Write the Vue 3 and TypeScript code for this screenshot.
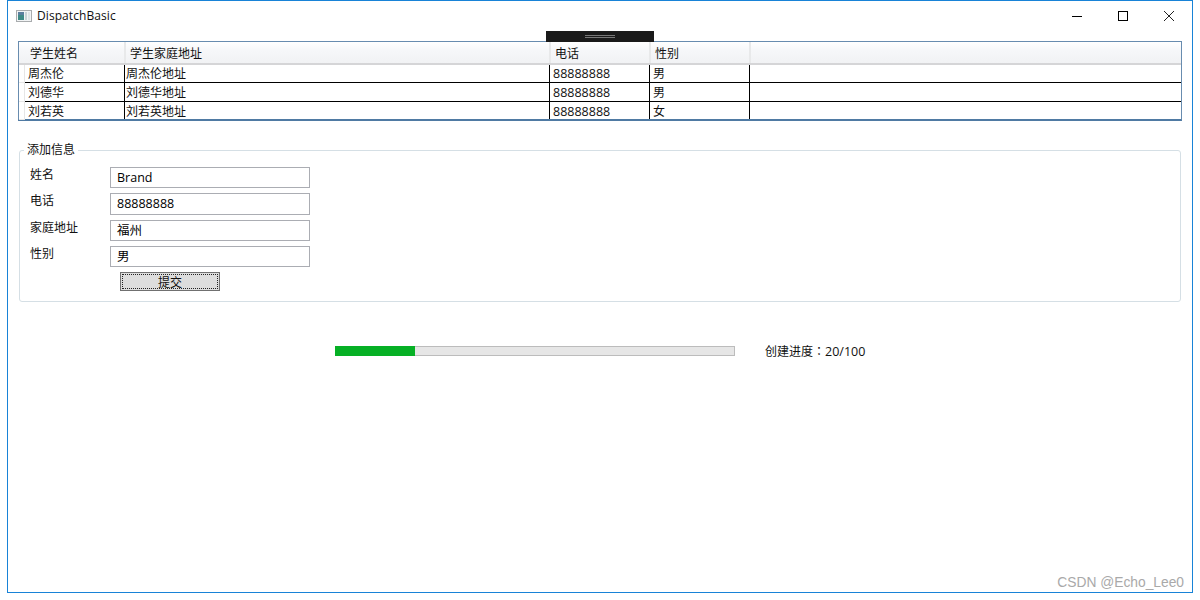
<script setup lang="ts">
interface Student { name: string; address: string; phone: string; gender: string }
const students: Student[] = [
  { name: '周杰伦', address: '周杰伦地址', phone: '88888888', gender: '男' },
  { name: '刘德华', address: '刘德华地址', phone: '88888888', gender: '男' },
  { name: '刘若英', address: '刘若英地址', phone: '88888888', gender: '女' },
]
const fields = [
  { label: '姓名', value: 'Brand' },
  { label: '电话', value: '88888888' },
  { label: '家庭地址', value: '福州' },
  { label: '性别', value: '男' },
]
const progress = 20
</script>

<template>
  <div class="window">
    <header class="titlebar">
      <svg class="app-icon" width="16" height="16" viewBox="0 0 16 16">
        <rect x="0.5" y="2.5" width="15" height="11" fill="#f2f4f5" stroke="#a9acae" />
        <rect x="2" y="4" width="6" height="8" fill="#3f8a86" />
        <rect x="2" y="4" width="6" height="3" fill="#5b7f9e" />
        <rect x="9" y="4" width="2" height="8" fill="#c9d4d6" />
        <rect x="12" y="4" width="2" height="8" fill="#dfe5e6" />
      </svg>
      <span class="title">DispatchBasic</span>
      <div class="controls">
        <svg width="46" height="30" viewBox="0 0 46 30"><path d="M18 15.5h10" stroke="#000" fill="none" /></svg>
        <svg width="46" height="30" viewBox="0 0 46 30"><rect x="18.5" y="10.5" width="9" height="9" stroke="#000" fill="none" /></svg>
        <svg width="46" height="30" viewBox="0 0 46 30"><path d="M18 10l10 10M28 10l-10 10" stroke="#222" fill="none" /></svg>
      </div>
    </header>

    <div class="debug-bar"><i></i></div>

    <main class="content">
      <section class="table">
        <div class="row head">
          <div class="gutter"></div>
          <div class="th c1">学生姓名</div>
          <div class="th c2">学生家庭地址</div>
          <div class="th c3">电话</div>
          <div class="th c4">性别</div>
          <div class="th fill"></div>
        </div>
        <div v-for="s in students" :key="s.name" class="row body">
          <div class="gutter"></div>
          <div class="td c1">{{ s.name }}</div>
          <div class="td c2">{{ s.address }}</div>
          <div class="td c3">{{ s.phone }}</div>
          <div class="td c4">{{ s.gender }}</div>
          <div class="td fill"></div>
        </div>
      </section>

      <fieldset class="group">
        <legend>添加信息</legend>
        <div class="fields">
          <div v-for="f in fields" :key="f.label" class="field">
            <label>{{ f.label }}</label>
            <div class="input">{{ f.value }}</div>
          </div>
        </div>
        <div class="button"><span>提交</span></div>
      </fieldset>

      <section class="progress">
        <div class="track"><div class="bar" :style="{ width: progress + '%' }"></div></div>
        <span class="progress-text">创建进度<span class="colon">：</span><span class="num">{{ progress }}/100</span></span>
      </section>
    </main>

    <div class="watermark">CSDN @Echo_Lee0</div>
  </div>
</template>

<style>
html, body { background: #fff; }
</style>

<style scoped>
.window {
  position: relative;
  box-sizing: border-box;
  width: 1186px;
  height: 593px;
  margin-left: 7px;
  border: 1px solid #1883d7;
  background: #fff;
  font: 12px/16px "Open Sans", "Noto Sans CJK SC", sans-serif;
  color: #111;
  display: flex;
  flex-direction: column;
}
.titlebar {
  height: 30px;
  display: flex;
  align-items: center;
  flex: none;
}
.app-icon { margin-left: 8px; margin-top: -1px; }
.title { margin-left: 5px; margin-top: -1px; letter-spacing: 0.08px; }
.controls { margin-left: auto; display: flex; }
.debug-bar {
  position: absolute;
  left: 538px;
  top: 30px;
  width: 108px;
  height: 11px;
  background: #1a1a1a;
  display: flex;
  align-items: center;
  justify-content: center;
}
.debug-bar i {
  display: block;
  width: 30px;
  height: 3px;
  border-top: 1px solid #777;
  border-bottom: 1px solid #777;
  box-sizing: border-box;
}
.content {
  padding: 10px 10px 0 10px;
  display: flex;
  flex-direction: column;
}
.table {
  box-sizing: border-box;
  width: 1164px;
  height: 80px;
  border: 1px solid #688caf;
  border-bottom: 2px solid #4f7aa3;
}
.row { display: flex; }
.head {
  height: 23px;
  box-sizing: border-box;
  background: linear-gradient(#ffffff 0, #f6f7f9 40%, #f1f2f4 100%);
  border-bottom: 2px solid #d5d5d7;
}
.body { height: 18px; box-sizing: border-box; border-bottom: 1px solid #000; }
.body:nth-child(3) { height: 19px; }
.body:last-child { height: 17px; border-bottom: 0; }
.gutter { width: 6px; flex: none; box-sizing: border-box; }
.body .gutter {
  border-right: 1px solid #e6e6e6;
  margin-bottom: -1px;
  border-bottom: 1px solid #e6e6e6;
}
.th, .td { box-sizing: border-box; flex: none; white-space: nowrap; }
.th { border-right: 2px solid #e8e9ea; padding: 4px 0 0 4px; }
.td { border-right: 1px solid #000; padding-left: 3px; line-height: 17px; }
.body:nth-child(3) .td, .body:last-child .td { line-height: 19px; }
.c1 { width: 100px; }
.th.c1 { width: 101px; padding-left: 5px; }
.c2 { width: 425px; }
.td.c2 { padding-left: 1px; }
.c3 { width: 100px; }
.td.c3 { font-size: 12.5px; }
.c4 { width: 100px; }
.th.fill, .td.fill { flex: 1; border-right: 0; }
.group {
  box-sizing: border-box;
  width: 1162px;
  height: 160px;
  margin: 21px 0 0 1px;
  padding: 0 0 0 10px;
  border: 1px solid #d5dfe5;
  border-radius: 3px;
  min-width: 0;
}
.group legend { padding: 0 3px; margin-left: -6px; font-size: 12px; line-height: 16px; }
.fields { padding-top: 9px; }
.field {
  display: flex;
  height: 26.4px;
}
.field label { width: 80px; flex: none; }
.input {
  box-sizing: border-box;
  width: 200px;
  height: 21.2px;
  border: 1px solid #abadb3;
  padding-left: 6px;
  line-height: 19px;
  color: #000;
  font-size: 12.5px;
}
.field:nth-child(2) .input { line-height: 20px; }
.button {
  box-sizing: border-box;
  width: 100px;
  height: 19px;
  margin: -0.6px 0 0 90px;
  background: #dddddd;
  border: 1px solid #707070;
  padding: 1px;
  text-align: center;
}
.button span {
  display: block;
  box-sizing: border-box;
  height: 15px;
  border: 1px dotted #222;
  line-height: 15px;
}
.progress {
  display: flex;
  align-items: center;
  margin: 43px 0 0 317px;
  height: 12px;
}
.track {
  box-sizing: border-box;
  width: 400px;
  height: 10px;
  background: #e6e6e6;
  border: 1px solid #bcbcbc;
}
.bar { height: 10px; margin: -1px; background: #06b025; }
.progress-text { margin-left: 30px; white-space: nowrap; line-height: 16px; margin-top: 1px; }
.colon { font-family: "Noto Sans CJK TC", sans-serif; }
.num { font-size: 12.5px; }
.watermark {
  position: absolute;
  right: 8px;
  bottom: 0;
  color: #a9a9a9;
  font: 13.8px/18px "Liberation Sans", sans-serif;
}
</style>
